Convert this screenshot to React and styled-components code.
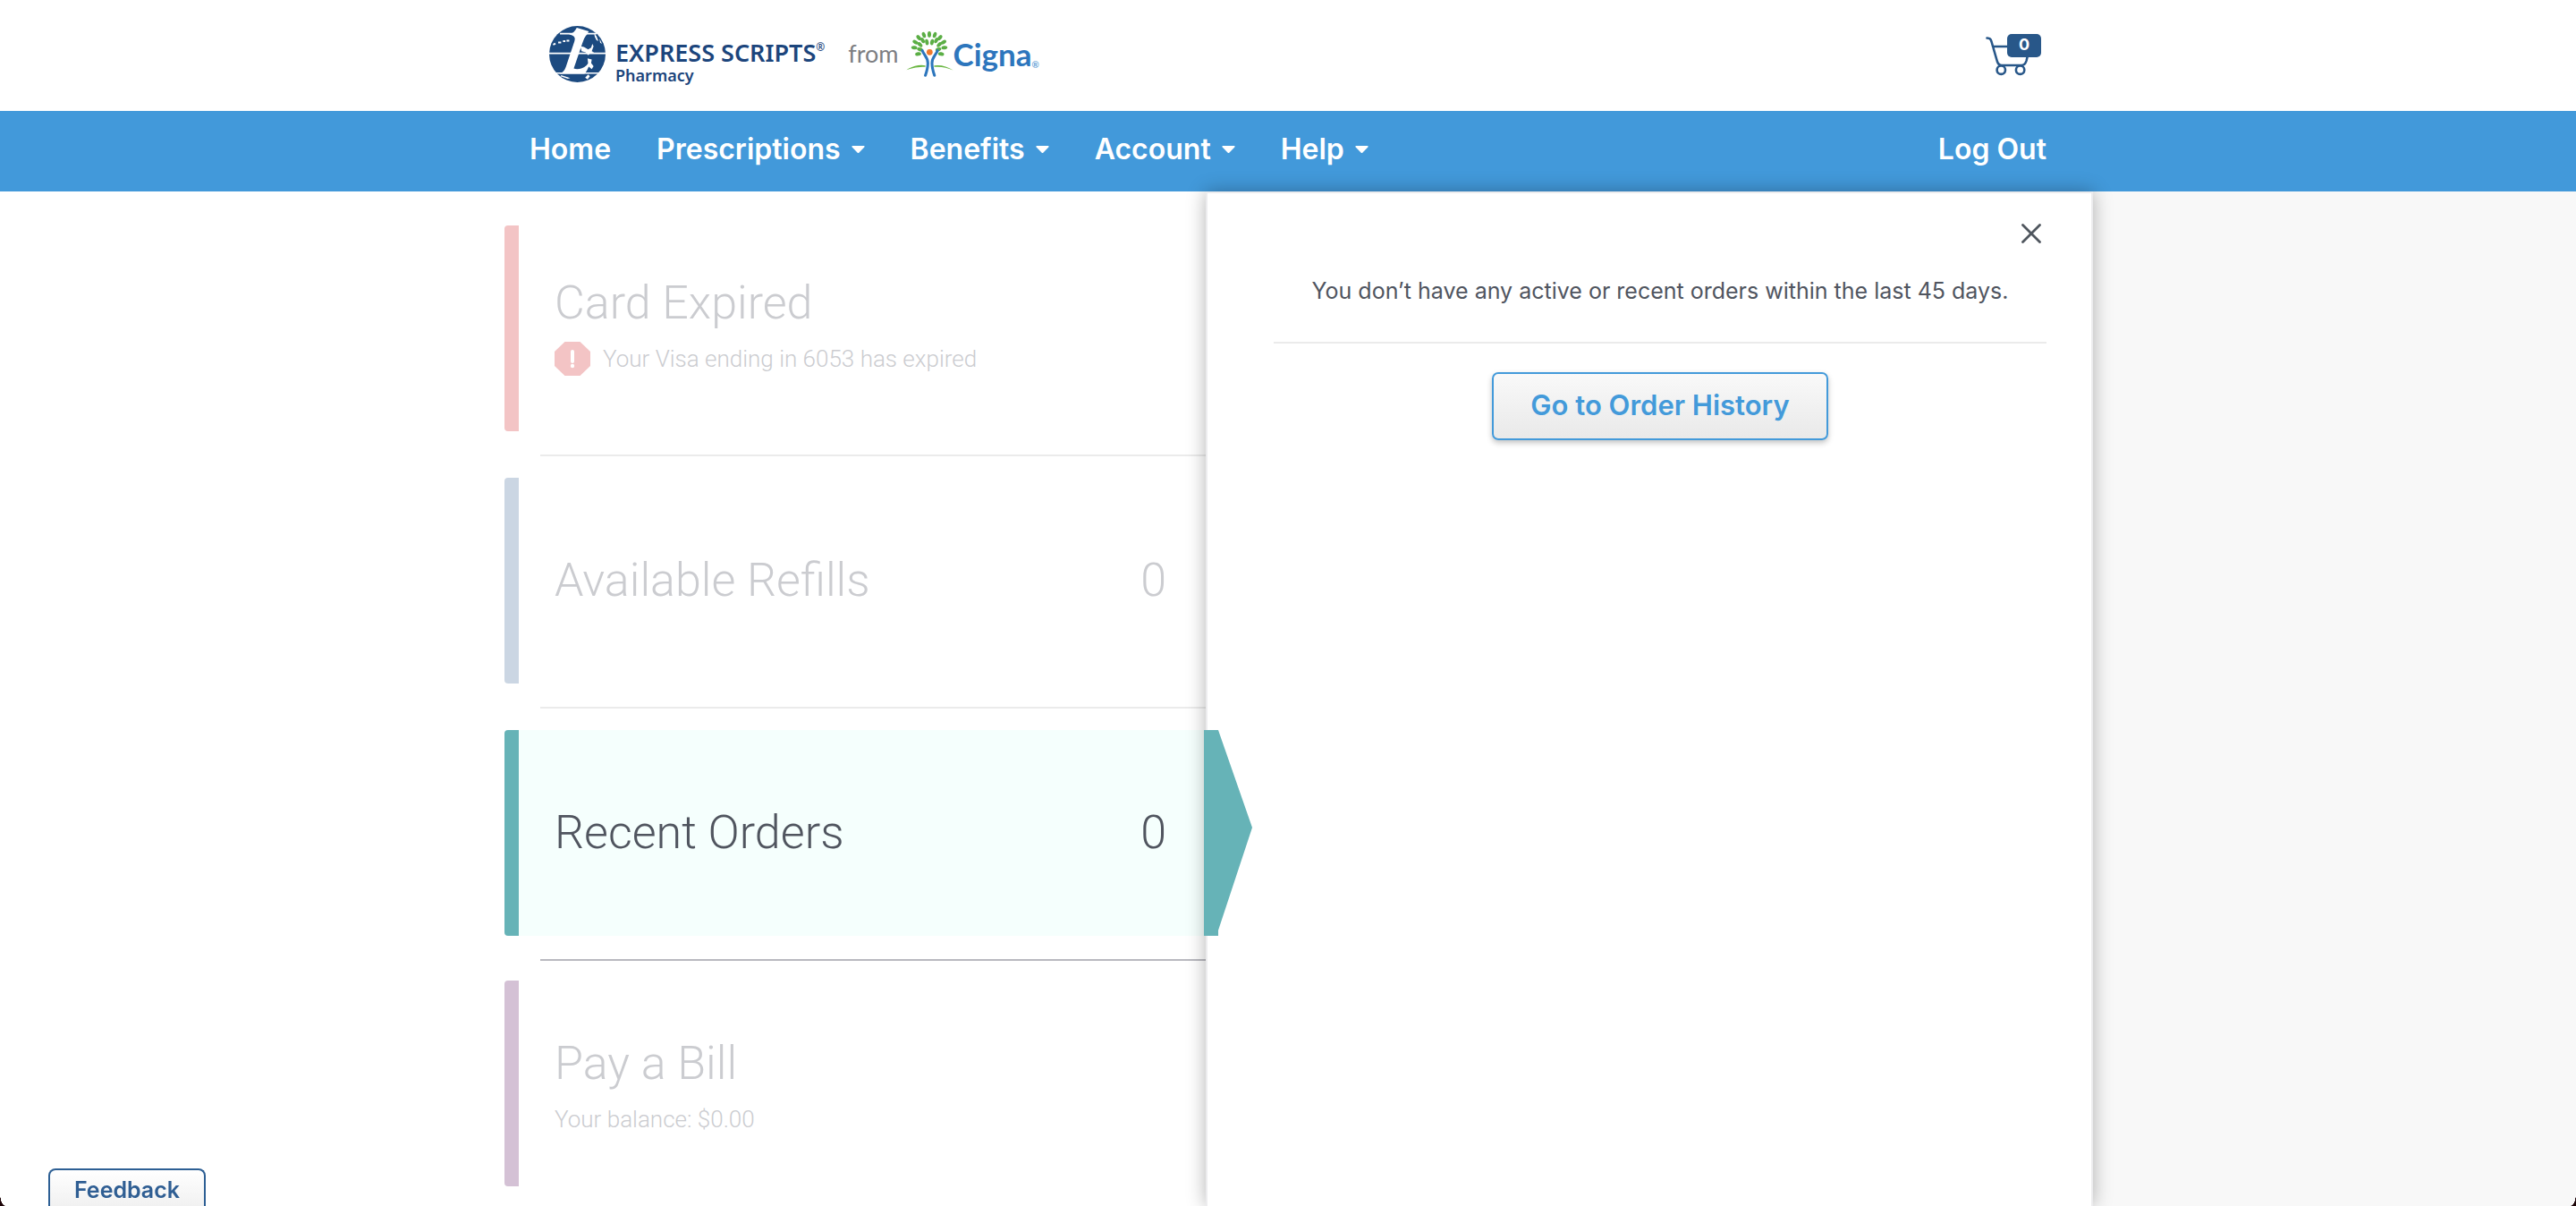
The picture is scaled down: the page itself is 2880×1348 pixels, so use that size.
import React from 'react';
import styled, { createGlobalStyle, css } from 'styled-components';

const ui = "Inter, 'Liberation Sans', sans-serif";
const light = "Roboto, 'Liberation Sans', sans-serif";

const GlobalStyle = createGlobalStyle`
  *, *::before, *::after { box-sizing: border-box; }
  body { margin: 0; background: #fff; color: #50555f; font-family: ${ui}; }
  h2, p { margin: 0; }
  button { font-family: inherit; cursor: pointer; }
`;

const Page = styled.div`
  display: flex;
  flex-direction: column;
  min-height: 100vh;
`;

const Bounds = styled.div`
  width: 100%;
  max-width: 1696px;
  margin: 0 auto;
  display: flex;
  align-items: center;
  justify-content: space-between;
`;

const Header = styled.header`
  display: flex;
  height: 124px;
  background: #fff;
  ${Bounds} { padding: 0 6px 4px 22px; }
`;

const Brand = styled.a`
  display: flex;
  align-items: center;
  color: #1c457c;
  text-decoration: none;
  white-space: nowrap;
`;

const Wordmark = styled.span`
  display: flex;
  flex-direction: column;
  padding: 20px 0 0 11px;
  font-family: 'Noto Sans', sans-serif;
  font-weight: 600;
`;

const Name = styled.span`
  display: flex;
  font-size: 27px;
  line-height: 28px;
`;

const Division = styled.span`
  font-size: 18px;
  line-height: 22px;
`;

const Mark = styled.small`
  font-size: 12px;
  line-height: 16px;
`;

const From = styled.span`
  padding: 0 8px 0 26px;
  color: #7d7e82;
  font: 400 27px/32px Lato, sans-serif;
`;

const Partner = styled.span`
  display: flex;
  align-items: flex-end;
  color: #2d76bd;
  font: 700 35px/40px Lato, sans-serif;
  ${Mark} { color: #6aa5d8; font-size: 10px; }
`;

const CartButton = styled.button`
  position: relative;
  width: 62px;
  height: 48px;
  padding: 0;
  border: 0;
  background: none;
  text-align: left;
`;

const CartCount = styled.span`
  position: absolute;
  top: 2px;
  right: 0;
  width: 38px;
  height: 26px;
  border-radius: 5px;
  background: #285789;
  color: #fff;
  font-size: 18px;
  font-weight: 700;
  line-height: 23px;
  text-align: center;
`;

const NavBar = styled.nav`
  display: flex;
  height: 90px;
  background: #4299da;
  ${Bounds} { padding-bottom: 4px; }
`;

const Menu = styled.ul`
  display: flex;
  gap: 51px;
  margin: 0;
  padding: 0;
  list-style: none;
`;

const navItem = css`
  display: flex;
  align-items: center;
  gap: 12px;
  padding: 0;
  border: 0;
  background: none;
  color: #fff;
  font: 600 32px/40px ${ui};
  text-decoration: none;
  white-space: nowrap;
`;
const NavLink = styled.a`${navItem}`;
const NavButton = styled.button`${navItem}`;

const Main = styled.main`
  flex: 1;
  display: flex;
  padding-left: 24px;
  background: linear-gradient(90deg, #fff 50%, #f8f8f8 50%);
`;

const Columns = styled.div`
  display: grid;
  grid-template-columns: 784fr 992fr;
  width: 100%;
  max-width: 1776px;
  margin: 0 auto;
`;

const CardList = styled.div`
  padding: 38px 0 18px;
  background: #fff;
`;

const Card = styled.section`
  position: relative;
  display: flex;
  align-items: center;
  justify-content: space-between;
  min-height: 230px;
  padding: 0 44px 0 40px;
  border-left: 16px solid ${p => p.$tone};
  border-radius: 4px 0 0 4px;
  color: ${p => (p.$active ? '#50555f' : '#cbccd0')};
  background: ${p => (p.$active ? '#f5fffd' : '#fff')};
  font-family: ${light};
  font-weight: 300;

  ${p => p.$active && css`
    &::after {
      content: '';
      position: absolute;
      z-index: 2;
      top: 0;
      bottom: 0;
      right: -52px;
      width: 54px;
      background: ${p.$tone};
      clip-path: polygon(0 0, 16px 0, 100% 109px, 16px 224px, 16px 100%, 0 100%);
    }
  `}
`;

const Divider = styled.hr`
  height: 2px;
  margin: 26px 0 ${p => (p.$strong ? 22 : 24)}px 40px;
  border: 0;
  background: ${p => (p.$strong ? '#b9b9bf' : '#ebebeb')};
`;

const CardText = styled.div`
  display: flex;
  flex-direction: column;
  gap: 8px;
  padding: ${p => (p.$alert ? '0 0 4px' : p.$detail ? '8px 0 0' : '0')};
`;

const CardTitle = styled.h2`
  font-size: 52px;
  font-weight: 300;
  line-height: 64px;
`;

const CardDetail = styled.p`
  display: flex;
  align-items: center;
  gap: 14px;
  font-size: 26px;
  line-height: 44px;
`;

const CardCount = styled.span`
  font-size: 52px;
  line-height: 64px;
`;

const Panel = styled.aside`
  position: relative;
  z-index: 1;
  display: flex;
  flex-direction: column;
  padding: 34px 50px 40px 74px;
  border: 2px solid #ececee;
  border-bottom: 0;
  background: #fff;
  box-shadow: 0 0 20px rgba(0, 0, 0, 0.3);
`;

const CloseButton = styled.button`
  align-self: flex-end;
  display: flex;
  margin-right: 6px;
  padding: 0;
  border: 0;
  background: none;
`;

const Message = styled.p`
  padding: 34px 0 38px;
  border-bottom: 2px solid #ebebeb;
  font-size: 25px;
  line-height: 38px;
  text-align: center;
`;

const HistoryButton = styled.button`
  align-self: center;
  min-width: 376px;
  height: 76px;
  margin-top: 32px;
  padding: 0 34px 4px;
  border: 2px solid #439ada;
  border-radius: 7px;
  background: linear-gradient(#f9f9f9, #e9e9e9);
  box-shadow: 0 3px 6px rgba(0, 0, 0, 0.24);
  color: #439ada;
  font-size: 31px;
  font-weight: 600;
`;

const FeedbackButton = styled.button`
  position: fixed;
  z-index: 3;
  left: 54px;
  bottom: 0;
  width: 176px;
  height: 42px;
  padding: 4px 0 0;
  border: 2px solid #2d5f94;
  border-bottom: 0;
  border-radius: 8px 8px 0 0;
  background: linear-gradient(#fff, #f1f1f1);
  color: #2f5e93;
  font-size: 25px;
  font-weight: 600;
`;

const WindowCorner = styled.span`
  position: fixed;
  z-index: 4;
  bottom: 0;
  ${p => p.$side}: 0;
  width: 6px;
  height: 14px;
  background: radial-gradient(ellipse 6px 14px at ${p => (p.$side === 'left' ? '100%' : '0')} 0, transparent 96%, #1d0508 100%);
`;

const Globe = () => (
  <svg width="63" height="63" viewBox="0 0 188 188" aria-hidden="true">
    <circle cx="94" cy="94" r="94" fill="#1c4a80" />
    <g fill="#fff">
      <path d="M36 23h122v5H36zM0 89h188v5H0zM24 155h140v5H24z" />
      <path d="M66 28c12-2 20-10 26-22l40 12-6 10c-8 8-12 20-16 32L82 142c10 4 30 2 42-10l12-14c-2 16-8 30-18 42H34c12-4 18-12 22-24L84 52c4-12 2-20-18-24z" />
      <path d="M104 68l12 2 14 8 10-6 4-12 4 8-6 16 8 4-12 2-8 8-8-10-14-4zM128 108l14 4-2 12 8 10-6 10-10-8-8 4 6-14z" />
      <path d="M150 24l8 10 6 16-6-2-6-12zM168 42l8 18-6-4zM120 172l10-10 6 6-8 10zM40 164l30 10-8 2-24-8z" />
      <path d="M12 60l8-4 2 6-8 3zM30 52h10v6H30zM46 48h8v6h-8zM58 46h9v6h-9z" />
    </g>
  </svg>
);

const leaves = [
  [77, 12, 0], [59, 14, -20], [95, 14, 20], [42, 23, -40], [112, 23, 40],
  [31, 38, -60], [124, 38, 60], [27, 56, -82], [127, 56, 82], [40, 77, -100], [116, 77, 100],
  [69, 38, -10], [86, 38, 10], [55, 32, -28], [100, 32, 28], [46, 46, -45], [110, 46, 45],
  [46, 62, -70], [107, 62, 70],
];

const Tree = () => (
  <svg width="53" height="52" viewBox="0 0 157 152" fill="none" aria-hidden="true">
    {leaves.map(([x, y, turn]) => (
      <ellipse key={`${x}-${y}`} cx={x} cy={y} rx="6" ry="10" fill="#5bae45" transform={`rotate(${turn} ${x} ${y})`} />
    ))}
    <path d="M1 130q30-20 63-15v5q-32-2-63 10zM93 115q34-4 63 16-30-14-63-11z" fill="#6cb744" />
    <path d="M54 66c4 14 20 22 18 44 0 14-4 26-8 38M104 66c-4 14-20 22-18 44 0 14 4 26 8 38" stroke="#2d76bd" strokeWidth="9" strokeLinecap="round" />
    <circle cx="78" cy="71" r="10" fill="#f0782b" />
  </svg>
);

const CartIcon = () => (
  <svg width="56" height="50" viewBox="0 0 56 50" fill="none" stroke="#285789" strokeWidth="2.6" strokeLinecap="round" strokeLinejoin="round" aria-hidden="true">
    <path d="M1.500 6.500C5 6.800 5.500 7.500 6.500 10.500L13 33q1.500 4 5 4h22q4 0 5.500-5l4-16H8" />
    <circle cx="17.300" cy="42.200" r="4.700" fill="#fff" />
    <circle cx="38.600" cy="42.200" r="4.700" fill="#fff" />
  </svg>
);

const Caret = () => (
  <svg width="15" height="8" viewBox="0 0 15 8" aria-hidden="true">
    <path d="M1.200 0h12.600q1.400.4.500 1.500L8.500 7.400q-1 1-2 0L.7 1.500Q-.2.400 1.200 0z" fill="#fff" />
  </svg>
);

const AlertIcon = () => (
  <svg width="40" height="38" viewBox="0 0 40 38" aria-hidden="true">
    <path d="M11.500 0h17L40 11v16L28.500 38h-17L0 27V11z" fill="#f3c4c5" />
    <path d="M20 11v11" stroke="#fff" strokeWidth="4" strokeLinecap="round" />
    <circle cx="20" cy="27" r="2.200" fill="#fff" />
  </svg>
);

const CloseIcon = () => (
  <svg width="22" height="22" viewBox="0 0 22 22" stroke="#4f565e" strokeWidth="2.800" strokeLinecap="round" aria-hidden="true">
    <path d="M1.500 1.500l19 19M20.500 1.500l-19 19" />
  </svg>
);

const menus = ['Prescriptions', 'Benefits', 'Account', 'Help'];

const cards = [
  { title: 'Card Expired', tone: '#f3c4c5', detail: 'Your Visa ending in 6053 has expired', alert: true },
  { title: 'Available Refills', tone: '#cbd6e3', count: 0 },
  { title: 'Recent Orders', tone: '#66b3b7', count: 0, active: true },
  { title: 'Pay a Bill', tone: '#d4c1d5', detail: 'Your balance: $0.00' },
];

export default function App() {
  return (
    <Page>
      <GlobalStyle />
      <Header>
        <Bounds>
          <Brand href="#home">
            <Globe />
            <Wordmark>
              <Name>EXPRESS SCRIPTS<Mark>®</Mark></Name>
              <Division>Pharmacy</Division>
            </Wordmark>
            <From>from</From>
            <Tree />
            <Partner>Cigna<Mark>®</Mark></Partner>
          </Brand>
          <CartButton type="button" aria-label="Cart, 0 items">
            <CartIcon />
            <CartCount>0</CartCount>
          </CartButton>
        </Bounds>
      </Header>
      <NavBar>
        <Bounds>
          <Menu>
            <li><NavLink href="#home">Home</NavLink></li>
            {menus.map(name => (
              <li key={name}><NavButton type="button" aria-haspopup="true">{name}<Caret /></NavButton></li>
            ))}
          </Menu>
          <NavLink href="#logout">Log Out</NavLink>
        </Bounds>
      </NavBar>
      <Main>
        <Columns>
          <CardList>
            {cards.map((card, i) => (
              <React.Fragment key={card.title}>
                <Card $tone={card.tone} $active={card.active}>
                  <CardText $alert={card.alert} $detail={card.detail}>
                    <CardTitle>{card.title}</CardTitle>
                    {card.detail && <CardDetail>{card.alert && <AlertIcon />}{card.detail}</CardDetail>}
                  </CardText>
                  {card.count !== undefined && <CardCount>{card.count}</CardCount>}
                </Card>
                {i < cards.length - 1 && <Divider $strong={card.active} />}
              </React.Fragment>
            ))}
          </CardList>
          <Panel>
            <CloseButton type="button" aria-label="Close"><CloseIcon /></CloseButton>
            <Message>You don’t have any active or recent orders within the last 45 days.</Message>
            <HistoryButton type="button">Go to Order History</HistoryButton>
          </Panel>
        </Columns>
      </Main>
      <FeedbackButton type="button">Feedback</FeedbackButton>
      <WindowCorner $side="left" />
      <WindowCorner $side="right" />
    </Page>
  );
}
